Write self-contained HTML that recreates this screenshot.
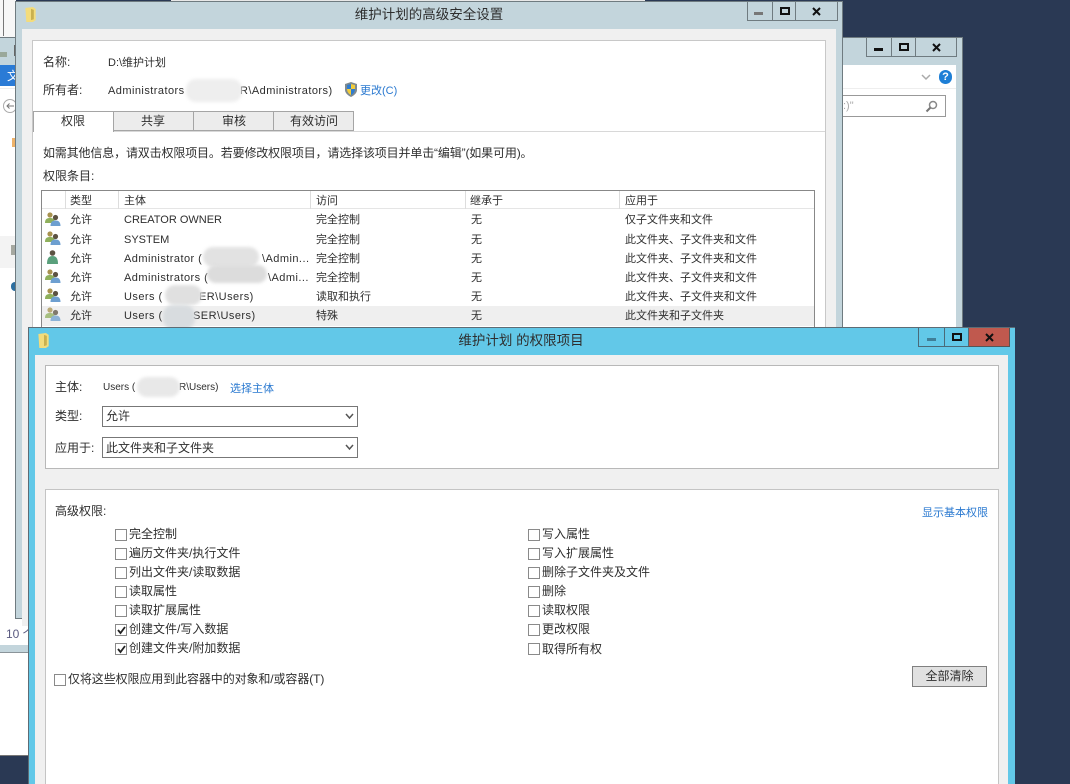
<!DOCTYPE html>
<html lang="zh"><head><meta charset="utf-8"><title>维护计划 的权限项目</title>
<style>
html,body{margin:0;padding:0;width:1070px;height:784px;overflow:hidden;background:#2a3954}
body{font-family:"Liberation Sans","Noto Sans CJK SC",sans-serif;font-size:11px;color:#2e2e2e}
#root{position:absolute;left:0;top:0;width:1070px;height:784px;overflow:hidden;background:#2a3954;filter:blur(.3px)}
#root div{position:absolute;box-sizing:border-box}
.t{position:absolute;white-space:nowrap;line-height:14px;height:14px}
.m{font-size:12px}
.g{letter-spacing:.45px}
.l{color:#2a79d0}
.bt{border:1px solid #6f7b80;border-top:0}
.blob{background:#e8e8e8;border-radius:10px;filter:blur(1.5px)}
.cb{width:12px;height:12px;border:1px solid #8a8a8a;background:#fff}
.sel{background:#fff;border:1px solid #777}
svg{position:absolute;overflow:visible}
</style></head><body>
<svg width="0" height="0" style="position:absolute"><defs>
<symbol id="u2" viewBox="0 0 16 14"><circle cx="5" cy="3" r="2.600" fill="#a8924f"/><path d="M0 11c0-4 2-5 5-5s5 1 5 5z" fill="#8fb05c"/><circle cx="10.500" cy="5.500" r="2.600" fill="#5c5242"/><path d="M5.500 14c0-4 2-5.500 5-5.500s5 1.500 5 5.500z" fill="#6d9fd0"/></symbol>
<symbol id="f" viewBox="0 0 12 16"><path d="M0 1l8-1 3 2v12l-3 2H1z" fill="#f3dc7c"/><path d="M6 2l3 1v10l-3 1z" fill="#c9b04f"/></symbol>
</defs></svg>
<div id="root">

<!-- far-left window remnant -->
<div style="left:0;top:0;width:16px;height:37px;background:#f7f7f7"></div>
<div style="left:3px;top:0;width:1px;height:36px;background:#777"></div>
<div style="left:171px;top:0;width:474px;height:2px;background:#e8e8e8"></div>

<!-- back window -->
<div style="left:-10px;top:37px;width:973px;height:616px;background:#c3d5dc;border:1px solid #6f7b80"></div>
<div style="left:0;top:65px;width:956px;height:580px;background:#fff"></div>
<div style="left:0;top:65px;width:16px;height:21px;background:#2a7bd6"></div>
<div class="t" style="left:7px;top:69px;color:#fff;font-size:12px">文</div>
<div style="left:0;top:88px;width:956px;height:1px;background:#eee"></div>
<div style="left:0;top:52px;width:7px;height:5px;background:#9aa89a"></div>
<div style="left:14px;top:45px;width:1px;height:11px;background:#666"></div>
<svg style="left:2px;top:98px" width="14" height="16"><circle cx="8" cy="8" r="6.500" fill="#fff" stroke="#aaa"/><path d="M12 8H5M7.500 5.500L5 8l2.500 2.500" fill="none" stroke="#777"/></svg>
<div style="left:12px;top:138px;width:3px;height:9px;background:#eeb36a"></div>
<div style="left:0;top:236px;width:15px;height:32px;background:#f3f3f3"></div>
<div style="left:11px;top:245px;width:4px;height:10px;background:#a5a8a0"></div>
<div style="left:11px;top:282px;width:4px;height:9px;background:#2c6fa0;border-radius:4px 0 0 4px"></div>
<div class="t" style="left:6px;top:627px;color:#5a5a80;font-size:12px">10 个</div>
<div style="left:0;top:646px;width:29px;height:7px;background:#c3d5dc;border-bottom:1px solid #8a9499"></div>
<div style="left:0;top:653px;width:29px;height:102px;background:#fff"></div>
<div style="left:0;top:755px;width:29px;height:1px;background:#777"></div>
<div class="bt" style="left:866px;top:38px;width:91px;height:19px;background:#c3d5dc"></div>
<div style="left:891px;top:38px;width:1px;height:19px;background:#6f7b80"></div>
<div style="left:915px;top:38px;width:1px;height:19px;background:#6f7b80"></div>
<div style="left:874px;top:48px;width:9px;height:3px;background:#111"></div>
<div style="left:899px;top:43px;width:10px;height:8px;border:2px solid #111"></div>
<svg style="left:932px;top:43px" width="10" height="9"><path d="M1 1l7 7M8 1L1 8" stroke="#111" stroke-width="2"/></svg>
<svg style="left:921px;top:74px" width="10" height="7"><path d="M1 1l4 4 4-4" fill="none" stroke="#aaa" stroke-width="1.500"/></svg>
<div style="left:939px;top:70px;width:13px;height:14px;border-radius:7px;background:#1e7fd6;color:#fff;font-weight:bold;font-size:11px;line-height:14px;text-align:center">?</div>
<div style="left:843px;top:95px;width:103px;height:22px;background:#fff;border:1px solid #999;border-left:0"></div>
<div class="t" style="left:843px;top:99px;color:#aaa">:)"</div>
<svg style="left:925px;top:100px" width="13" height="13"><circle cx="8" cy="5" r="3.500" fill="none" stroke="#888" stroke-width="1.500"/><path d="M5.500 7.500L1.500 11.500" stroke="#777" stroke-width="2"/></svg>

<!-- dialog 1 -->
<div style="left:15px;top:1px;width:828px;height:618px;background:#c3d5dc;border:1px solid #6f7b80"></div>
<div style="left:22px;top:29px;width:814px;height:597px;background:#f0f0f0"></div>
<div style="left:32px;top:40px;width:794px;height:600px;background:#fff;border:1px solid #c8c8c8"></div>
<svg style="left:25px;top:7px" width="12" height="15"><use href="#f" width="12" height="15"/></svg>
<div class="t" style="left:0;top:8px;width:858px;text-align:center;font-size:13.500px">维护计划的高级安全设置</div>
<div class="bt" style="left:747px;top:2px;width:91px;height:19px;background:#c3d5dc"></div>
<div style="left:772px;top:2px;width:1px;height:19px;background:#6f7b80"></div>
<div style="left:795px;top:2px;width:1px;height:19px;background:#6f7b80"></div>
<div style="left:754px;top:12px;width:9px;height:3px;background:#777"></div>
<div style="left:780px;top:7px;width:10px;height:8px;border:2px solid #111"></div>
<svg style="left:812px;top:7px" width="10" height="9"><path d="M1 1l7 7M8 1L1 8" stroke="#111" stroke-width="2"/></svg>

<div class="t m" style="left:43px;top:55px">名称:</div>
<div class="t" style="left:108px;top:56px">D:\维护计划</div>
<div class="t m" style="left:43px;top:83px">所有者:</div>
<div class="t g" style="left:108px;top:84px">Administrators</div>
<div class="t g" style="left:240px;top:84px">R\Administrators)</div>
<div class="blob" style="left:186px;top:79px;width:56px;height:23px;background:#eee"></div>
<svg style="left:344px;top:82px" width="14" height="15" viewBox="0 0 14 15"><path d="M7 0l6 2v6c0 3-3 5.500-6 7-3-1.500-6-4-6-7V2z" fill="#7f8a90"/><path d="M7 2v5H3V3z" fill="#2e7cd0"/><path d="M7 2l4 1v4H7z" fill="#f2cc3a"/><path d="M3 7h4v6C5 12 3 10 3 7z" fill="#f2cc3a"/><path d="M7 7h4c0 3-2 5-4 6z" fill="#2e7cd0"/></svg>
<div class="t l" style="left:360px;top:84px">更改(C)</div>

<!-- tabs -->
<div style="left:33px;top:131px;width:792px;height:1px;background:#d8d8d8"></div>
<div style="left:113px;top:111px;width:81px;height:20px;background:#ececec;border:1px solid #a5a5a5"></div>
<div style="left:193px;top:111px;width:81px;height:20px;background:#ececec;border:1px solid #a5a5a5"></div>
<div style="left:273px;top:111px;width:81px;height:20px;background:#ececec;border:1px solid #a5a5a5"></div>
<div style="left:33px;top:111px;width:81px;height:21px;background:#fff;border:1px solid #a5a5a5;border-bottom:0"></div>
<div class="t m" style="left:61px;top:114px">权限</div>
<div class="t m" style="left:141px;top:114px">共享</div>
<div class="t m" style="left:222px;top:114px">审核</div>
<div class="t m" style="left:290px;top:114px">有效访问</div>
<div class="t m" style="left:43px;top:146px;letter-spacing:-.15px">如需其他信息，请双击权限项目。若要修改权限项目，请选择该项目并单击“编辑”(如果可用)。</div>
<div class="t m" style="left:43px;top:169px">权限条目:</div>

<!-- table -->
<div style="left:41px;top:190px;width:774px;height:150px;background:#fff;border:1px solid #888"></div>
<div style="left:42px;top:191px;width:772px;height:18px;background:#fff;border-bottom:1px solid #e5e5e5"></div>
<div style="left:65px;top:191px;width:1px;height:18px;background:#ddd"></div>
<div style="left:118px;top:191px;width:1px;height:18px;background:#ddd"></div>
<div style="left:310px;top:191px;width:1px;height:18px;background:#ddd"></div>
<div style="left:465px;top:191px;width:1px;height:18px;background:#ddd"></div>
<div style="left:619px;top:191px;width:1px;height:18px;background:#ddd"></div>
<div class="t" style="left:70px;top:194px">类型</div><div class="t" style="left:124px;top:194px">主体</div><div class="t" style="left:316px;top:194px">访问</div><div class="t" style="left:470px;top:194px">继承于</div><div class="t" style="left:625px;top:194px">应用于</div>

<div style="left:42px;top:306px;width:772px;height:20px;background:#efefef"></div>

<svg style="left:45px;top:212px" width="16" height="14"><use href="#u2" width="16" height="14"/></svg>
<svg style="left:45px;top:231px" width="16" height="14"><use href="#u2" width="16" height="14"/></svg>
<svg style="left:47px;top:250px" width="11" height="14" viewBox="0 0 11 14"><circle cx="5.500" cy="3" r="2.800" fill="#5c5242"/><path d="M0 14c0-6 2-8 5.500-8s5.500 2 5.500 8z" fill="#5aa07c"/></svg>
<svg style="left:45px;top:269px" width="16" height="14"><use href="#u2" width="16" height="14"/></svg>
<svg style="left:45px;top:288px" width="16" height="14"><use href="#u2" width="16" height="14"/></svg>
<svg style="left:45px;top:307px;opacity:.75" width="16" height="14"><use href="#u2" width="16" height="14"/></svg>

<div class="t" style="left:70px;top:213px">允许</div><div class="t" style="left:124px;top:213px">CREATOR OWNER</div><div class="t" style="left:316px;top:213px">完全控制</div><div class="t" style="left:471px;top:213px">无</div><div class="t" style="left:625px;top:213px">仅子文件夹和文件</div>
<div class="t" style="left:70px;top:233px">允许</div><div class="t" style="left:124px;top:233px">SYSTEM</div><div class="t" style="left:316px;top:233px">完全控制</div><div class="t" style="left:471px;top:233px">无</div><div class="t" style="left:625px;top:233px">此文件夹、子文件夹和文件</div>
<div class="t" style="left:70px;top:252px">允许</div><div class="t g" style="left:124px;top:252px">Administrator (</div><div class="t g" style="left:262px;top:252px">\Admin...</div><div class="t" style="left:316px;top:252px">完全控制</div><div class="t" style="left:471px;top:252px">无</div><div class="t" style="left:625px;top:252px">此文件夹、子文件夹和文件</div>
<div class="t" style="left:70px;top:271px">允许</div><div class="t g" style="left:124px;top:271px">Administrators (</div><div class="t g" style="left:268px;top:271px">\Admi...</div><div class="t" style="left:316px;top:271px">完全控制</div><div class="t" style="left:471px;top:271px">无</div><div class="t" style="left:625px;top:271px">此文件夹、子文件夹和文件</div>
<div class="t" style="left:70px;top:290px">允许</div><div class="t g" style="left:124px;top:290px">Users (</div><div class="t g" style="left:199px;top:290px">ER\Users)</div><div class="t" style="left:316px;top:290px">读取和执行</div><div class="t" style="left:471px;top:290px">无</div><div class="t" style="left:625px;top:290px">此文件夹、子文件夹和文件</div>
<div class="t" style="left:70px;top:309px">允许</div><div class="t g" style="left:124px;top:309px">Users (</div><div class="t g" style="left:193px;top:309px">SER\Users)</div><div class="t" style="left:316px;top:309px">特殊</div><div class="t" style="left:471px;top:309px">无</div><div class="t" style="left:625px;top:309px">此文件夹和子文件夹</div>

<div class="blob" style="left:203px;top:247px;width:56px;height:20px;background:#e2e2e2"></div>
<div class="blob" style="left:207px;top:265px;width:60px;height:18px;background:#dcdcdc"></div>
<div class="blob" style="left:165px;top:285px;width:37px;height:20px;background:#e0e0e0"></div>
<div class="blob" style="left:163px;top:305px;width:32px;height:24px;background:#d8dcdf"></div>

<!-- dialog 2 -->
<div style="left:28px;top:327px;width:987px;height:460px;background:#62c8e8;border:1px solid #5d6c75;border-width:1px 0 0 1px"></div>
<div style="left:35px;top:355px;width:973px;height:432px;background:#f0f0f0"></div>
<svg style="left:38px;top:333px" width="12" height="15"><use href="#f" width="12" height="15"/></svg>
<div class="t" style="left:0;top:334px;width:1042px;text-align:center;font-size:13.500px">维护计划 的权限项目</div>
<div class="bt" style="left:918px;top:328px;width:92px;height:19px;border-color:#4a6a78;background:#62c8e8"></div>
<div style="left:944px;top:328px;width:1px;height:19px;background:#4a6a78"></div>
<div style="left:968px;top:328px;width:42px;height:19px;background:#c0594e;border-left:1px solid #4a6a78;border-bottom:1px solid #555;border-right:1px solid #555"></div>
<div style="left:927px;top:338px;width:9px;height:3px;background:#3f7f98"></div>
<div style="left:952px;top:333px;width:10px;height:8px;border:2px solid #111"></div>
<svg style="left:985px;top:333px" width="10" height="9"><path d="M1 1l7 7M8 1L1 8" stroke="#111" stroke-width="2"/></svg>

<div style="left:45px;top:365px;width:954px;height:104px;background:#fff;border:1px solid #b8b8b8"></div>
<div class="t m" style="left:55px;top:380px">主体:</div>
<div class="t" style="left:103px;top:381px;font-size:10px">Users (</div>
<div class="t" style="left:179px;top:381px;font-size:10px">R\Users)</div>
<div class="blob" style="left:137px;top:377px;width:43px;height:20px"></div>
<div class="t l" style="left:230px;top:382px">选择主体</div>
<div class="t m" style="left:55px;top:409px">类型:</div>
<div class="sel" style="left:102px;top:406px;width:256px;height:21px"></div>
<div class="t m" style="left:106px;top:409px">允许</div>
<svg style="left:345px;top:413px" width="9" height="7"><path d="M1 1l3.500 4L8 1" fill="none" stroke="#555" stroke-width="1.500"/></svg>
<div class="t m" style="left:55px;top:441px">应用于:</div>
<div class="sel" style="left:102px;top:437px;width:256px;height:21px"></div>
<div class="t m" style="left:106px;top:441px">此文件夹和子文件夹</div>
<svg style="left:345px;top:444px" width="9" height="7"><path d="M1 1l3.500 4L8 1" fill="none" stroke="#555" stroke-width="1.500"/></svg>

<div style="left:45px;top:489px;width:954px;height:310px;background:#fff;border:1px solid #c4c4c4"></div>
<div class="t m" style="left:55px;top:504px">高级权限:</div>
<div class="t l" style="left:922px;top:506px">显示基本权限</div>

<div class="cb" style="left:115px;top:529px"></div><div class="t m" style="left:129px;top:527px">完全控制</div>
<div class="cb" style="left:115px;top:548px"></div><div class="t m" style="left:129px;top:546px">遍历文件夹/执行文件</div>
<div class="cb" style="left:115px;top:567px"></div><div class="t m" style="left:129px;top:565px">列出文件夹/读取数据</div>
<div class="cb" style="left:115px;top:586px"></div><div class="t m" style="left:129px;top:584px">读取属性</div>
<div class="cb" style="left:115px;top:605px"></div><div class="t m" style="left:129px;top:603px">读取扩展属性</div>
<div class="cb" style="left:115px;top:624px"></div><div class="t m" style="left:129px;top:622px">创建文件/写入数据</div>
<svg style="left:117px;top:626px" width="9" height="8"><path d="M1 4l2.500 3L8 1" fill="none" stroke="#222" stroke-width="1.800"/></svg>
<div class="cb" style="left:115px;top:643px"></div><div class="t m" style="left:129px;top:641px">创建文件夹/附加数据</div>
<svg style="left:117px;top:645px" width="9" height="8"><path d="M1 4l2.500 3L8 1" fill="none" stroke="#222" stroke-width="1.800"/></svg>

<div class="cb" style="left:528px;top:529px"></div><div class="t m" style="left:542px;top:527px">写入属性</div>
<div class="cb" style="left:528px;top:548px"></div><div class="t m" style="left:542px;top:546px">写入扩展属性</div>
<div class="cb" style="left:528px;top:567px"></div><div class="t m" style="left:542px;top:565px">删除子文件夹及文件</div>
<div class="cb" style="left:528px;top:586px"></div><div class="t m" style="left:542px;top:584px">删除</div>
<div class="cb" style="left:528px;top:605px"></div><div class="t m" style="left:542px;top:603px">读取权限</div>
<div class="cb" style="left:528px;top:624px"></div><div class="t m" style="left:542px;top:622px">更改权限</div>
<div class="cb" style="left:528px;top:643px"></div><div class="t m" style="left:542px;top:642px">取得所有权</div>

<div class="cb" style="left:54px;top:674px"></div><div class="t m" style="left:68px;top:672px;letter-spacing:-.1px">仅将这些权限应用到此容器中的对象和/或容器(T)</div>
<div class="m" style="left:912px;top:666px;width:75px;height:21px;background:#e1e1e1;border:1px solid #808080;text-align:center;line-height:18px">全部清除</div>
</div>
</body></html>
